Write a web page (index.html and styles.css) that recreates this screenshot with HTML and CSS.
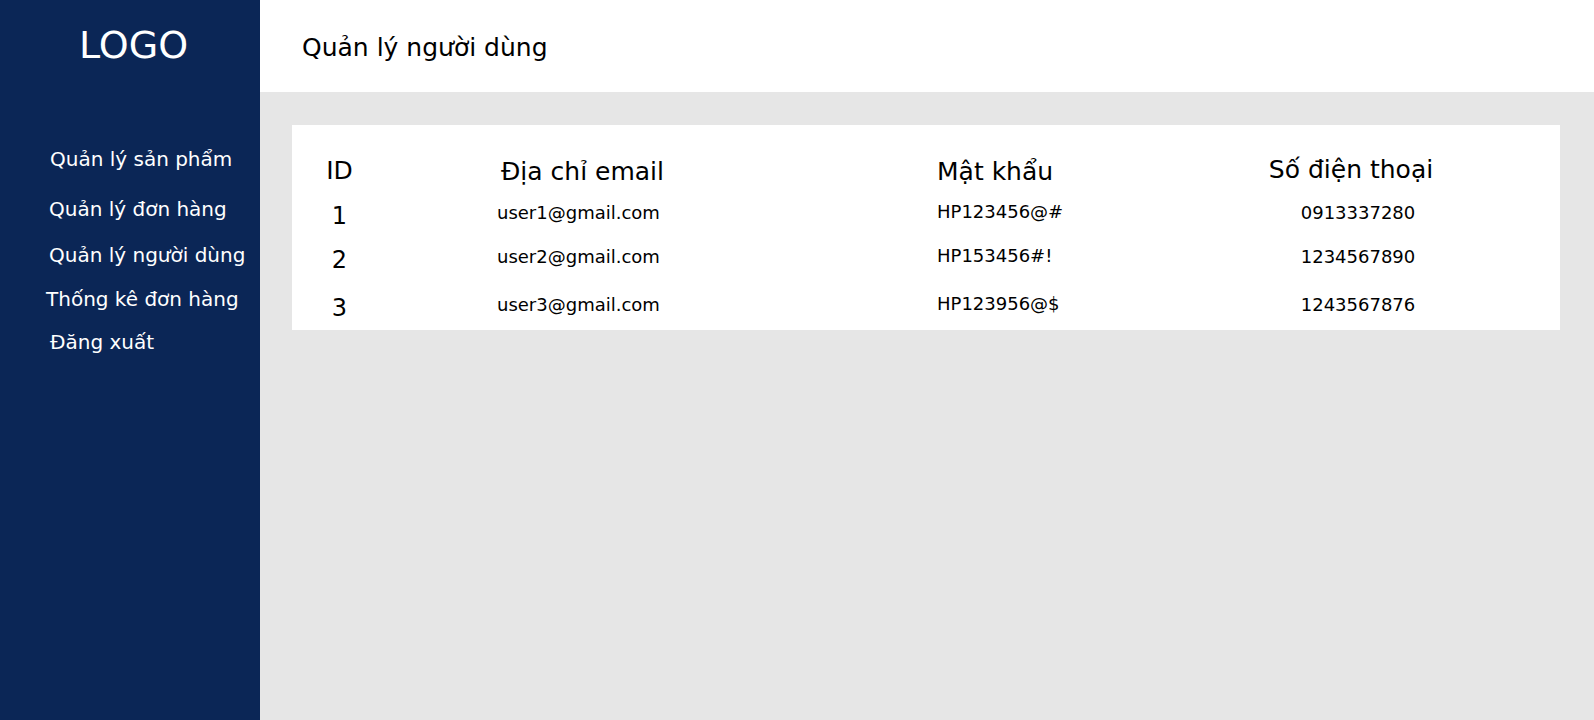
FILE: index.html
```html
<!DOCTYPE html>
<html lang="vi">
<head>
<meta charset="utf-8">
<title>Quản lý người dùng</title>
<link rel="stylesheet" href="styles.css">
</head>
<body>
<div class="app">
  <aside class="sidebar">
    <div class="logo">LOGO</div>
    <nav class="nav">
      <a class="nav-item">Quản lý sản phẩm</a>
      <a class="nav-item">Quản lý đơn hàng</a>
      <a class="nav-item">Quản lý người dùng</a>
      <a class="nav-item">Thống kê đơn hàng</a>
      <a class="nav-item">Đăng xuất</a>
    </nav>
  </aside>
  <main class="main">
    <header class="topbar">
      <h1 class="title">Quản lý người dùng</h1>
    </header>
    <section class="content">
      <div class="card">
        <div class="row head">
          <div class="c-id">ID</div>
          <div class="c-email">Địa chỉ email</div>
          <div class="c-pass">Mật khẩu</div>
          <div class="c-phone">Số điện thoại</div>
        </div>
        <div class="row data">
          <div class="c-id">1</div>
          <div class="c-email">user1@gmail.com</div>
          <div class="c-pass">HP123456@#</div>
          <div class="c-phone">0913337280</div>
        </div>
        <div class="row data">
          <div class="c-id">2</div>
          <div class="c-email">user2@gmail.com</div>
          <div class="c-pass">HP153456#!</div>
          <div class="c-phone">1234567890</div>
        </div>
        <div class="row data last">
          <div class="c-id">3</div>
          <div class="c-email">user3@gmail.com</div>
          <div class="c-pass">HP123956@$</div>
          <div class="c-phone">1243567876</div>
        </div>
      </div>
    </section>
  </main>
</div>
</body>
</html>
```
FILE: styles.css
```css
* { box-sizing: border-box; }
html, body {
  margin: 0;
  padding: 0;
  height: 100%;
}
body {
  font-family: "DejaVu Sans", Verdana, sans-serif;
  color: #000;
  background: #e6e6e6;
}
.app {
  display: flex;
  height: 720px;
}
.sidebar {
  width: 260px;
  flex: 0 0 260px;
  background: #0b2656;
  color: #fff;
  padding-top: 25px;
}
.logo {
  font-size: 38px;
  line-height: 40px;
  text-align: center;
  padding-left: 7px;
}
.nav {
  display: flex;
  flex-direction: column;
  margin-top: 82px;
}
.nav-item {
  display: block;
  font-size: 20px;
  line-height: 24px;
  padding-left: 49px;
  color: #fff;
}
.nav-item:nth-child(1) { height: 50px; padding-left: 50px; }
.nav-item:nth-child(2) { height: 46px; }
.nav-item:nth-child(3) { height: 44px; }
.nav-item:nth-child(4) { height: 43px; padding-left: 46px; }
.nav-item:nth-child(5) { padding-left: 50px; }

.main {
  flex: 1;
  display: flex;
  flex-direction: column;
}
.topbar {
  height: 92px;
  background: #fff;
  display: flex;
  align-items: center;
  padding-left: 42px;
}
.title {
  margin: 0;
  font-size: 25px;
  font-weight: normal;
  line-height: 30px;
  margin-top: 4px;
}
.content {
  padding: 33px 34px 0 32px;
}
.card {
  background: #fff;
  padding: 30px 0 0 0;
  height: 205px;
}
.row {
  display: grid;
  grid-template-columns: 95px 550px 213px 1fr;
  align-items: center;
}
.head {
  height: 30px;
  font-size: 25px;
  line-height: 30px;
  margin-bottom: 6px;
}
.data {
  height: 44px;
  font-size: 18px;
  line-height: 22px;
}
.data.last { height: 52px; }
.c-id { text-align: center; }
.data .c-id { font-size: 24px; margin-top: 5px; }
.c-email { padding-left: 110px; }
.head .c-email { padding-left: 114px; margin-top: 2px; }
.head .c-pass { margin-top: 2px; }
.c-phone { text-align: center; }
.head .c-phone { padding-right: 8px; margin-top: -2px; }
.data .c-phone { padding-left: 6px; }
.data .c-pass { margin-top: -2px; }
```
